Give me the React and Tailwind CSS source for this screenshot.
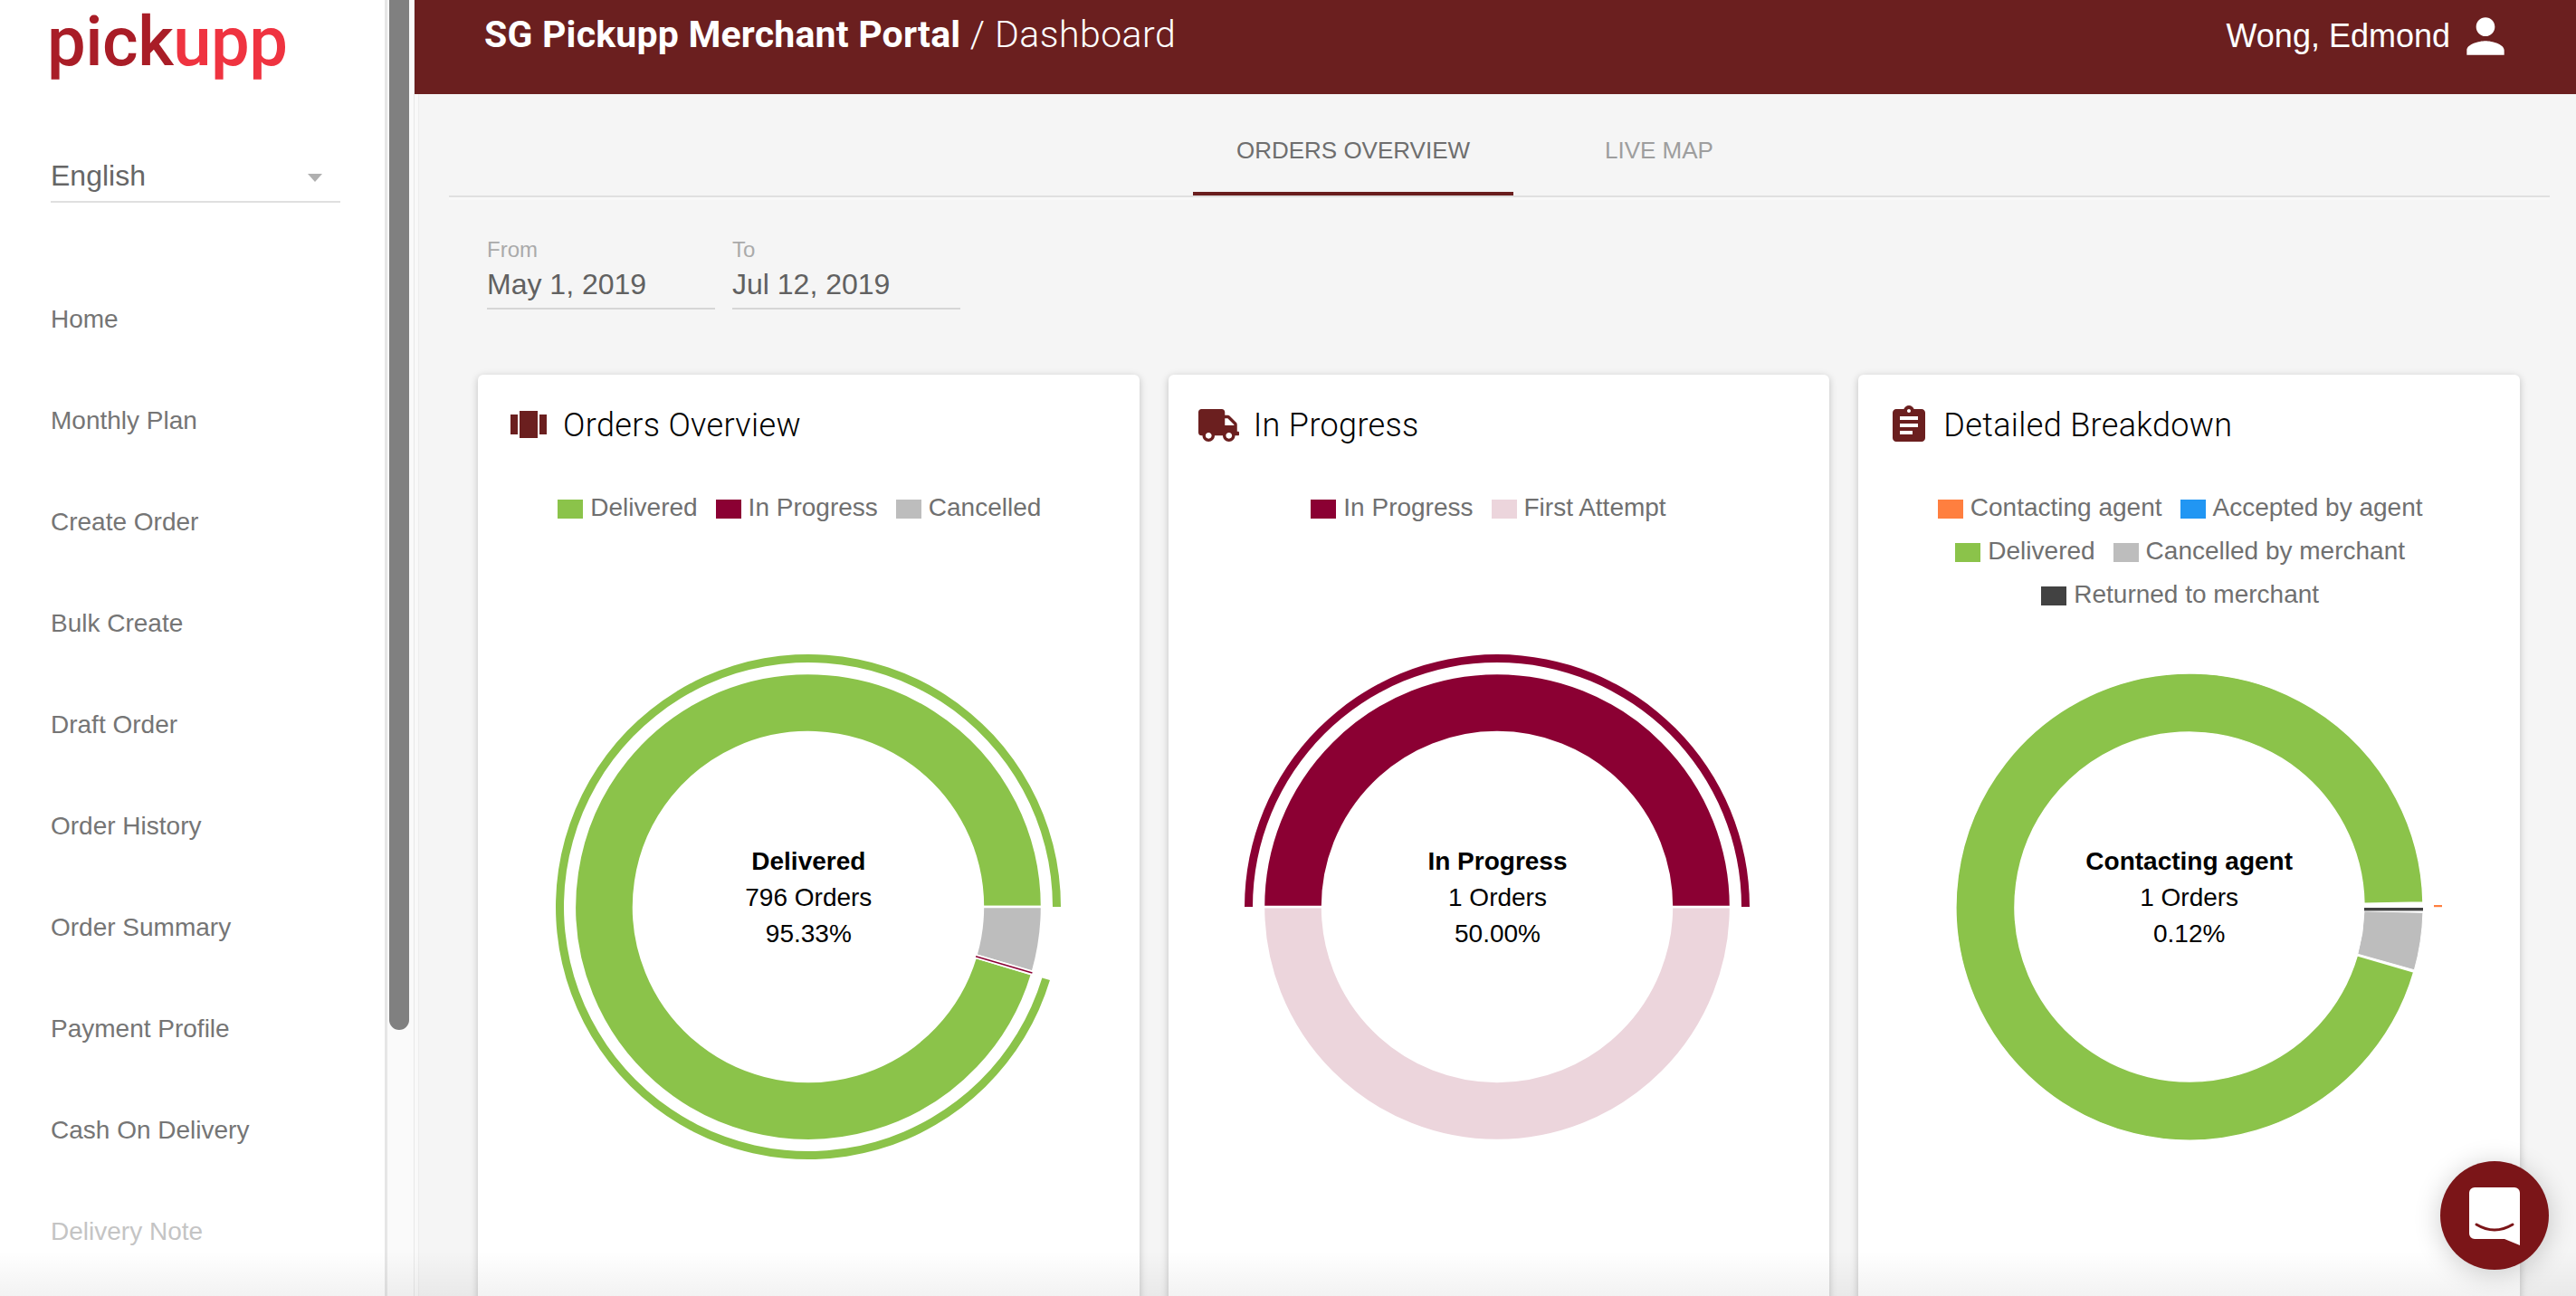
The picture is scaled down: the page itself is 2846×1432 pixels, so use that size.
import React from "react";
import { FaTruck } from "react-icons/fa";

const GREEN = "#8bc34a", CRIMSON = "#8b0033", PINK = "#ecd5dc", GREY = "#bdbdbd", ORANGE = "#ff7f3f", BLUE = "#2196f3", DARK = "#424242";
const C = 300;

function arc(r0, r1, a0, a1) {
  const p = (r, a) => {
    const t = (a * Math.PI) / 180;
    return `${(C + r * Math.cos(t)).toFixed(2)} ${(C + r * Math.sin(t)).toFixed(2)}`;
  };
  const large = a1 - a0 > 180 ? 1 : 0;
  return `M${p(r1, a0)}A${r1} ${r1} 0 ${large} 1 ${p(r1, a1)}L${p(r0, a1)}A${r0} ${r0} 0 ${large} 0 ${p(r0, a0)}Z`;
}
function radial(a, r0, r1) {
  const t = (a * Math.PI) / 180;
  return { x1: C + r0 * Math.cos(t), y1: C + r0 * Math.sin(t), x2: C + r1 * Math.cos(t), y2: C + r1 * Math.sin(t) };
}

const R0 = 193, R1 = 258, H0 = 270, H1 = 279;

function Chart1() {
  return (
    <svg width="600" height="600" viewBox="0 0 600 600" className="block mx-auto">
      <path d={arc(R0, R1, 16.8, 360)} fill={GREEN} stroke="#fff" strokeWidth="2.4" />
      <path d={arc(R0, R1, 0, 16.1)} fill={GREY} stroke="#fff" strokeWidth="2.4" />
      <line {...radial(16.45, R0, R1)} stroke="#fff" strokeWidth="5" />
      <line {...radial(16.45, R0, R1)} stroke={CRIMSON} strokeWidth="1.6" />
      <path d={arc(H0, H1, 16.9, 360)} fill={GREEN} />
    </svg>
  );
}
function Chart2() {
  return (
    <svg width="600" height="600" viewBox="0 0 600 600" className="block mx-auto">
      <path d={arc(R0, R1, 0, 180)} fill={PINK} stroke="#fff" strokeWidth="2.4" />
      <path d={arc(R0, R1, 180, 360)} fill={CRIMSON} stroke="#fff" strokeWidth="2.4" />
      <path d={arc(H0, H1, 180, 360)} fill={CRIMSON} />
    </svg>
  );
}
function Chart3() {
  return (
    <svg width="600" height="600" viewBox="0 0 600 600" className="block mx-auto">
      <path d={arc(R0, R1, 16.2, 358.9)} fill={GREEN} stroke="#fff" strokeWidth="1.4" />
      <path d={arc(R0, R1, 1.4, 15.7)} fill={GREY} stroke="#fff" strokeWidth="1" />
      <rect x={C + R0} y={C + 1} width={R1 - R0} height="3.4" fill={DARK} />
      <rect x={C + 270} y={C - 2} width="9" height="2.2" fill={ORANGE} />
    </svg>
  );
}

const ICON = "#6b1f1f";
const CarouselIcon = () => (
  <svg viewBox="0 0 48 48" className="w-12 h-12" fill={ICON}>
    <rect x="4" y="12" width="8" height="22" />
    <rect x="14" y="8" width="20" height="30" />
    <rect x="36" y="12" width="8" height="22" />
  </svg>
);
const TruckIcon = () => (
  <span className="w-12 h-12 flex items-center justify-center">
    <FaTruck className="w-[45px] h-[36px]" style={{ color: ICON }} />
  </span>
);
const ClipboardIcon = () => (
  <svg viewBox="0 0 24 24" className="w-12 h-12" fill={ICON}>
    <path d="M19 3h-4.18C14.4 1.84 13.3 1 12 1c-1.3 0-2.4.84-2.82 2H5c-1.1 0-2 .9-2 2v14c0 1.1.9 2 2 2h14c1.1 0 2-.9 2-2V5c0-1.1-.9-2-2-2zm-7 0c.55 0 1 .45 1 1s-.45 1-1 1-1-.45-1-1 .45-1 1-1zm2 14H7v-2h7v2zm3-4H7v-2h10v2zm0-4H7V7h10v2z" />
  </svg>
);

function Legend({ rows }) {
  return (
    <div className="h-[208px] pt-[43px] font-['Liberation_Sans',Arial,sans-serif] text-[28px] text-[#707070]">
      {rows.map((row, i) => (
        <div key={i} className="h-12 flex items-center justify-center">
          {row.map(([label, color]) => (
            <span key={label} className="flex items-center mr-[20px]">
              <span className="w-[28px] h-[21px] mr-[8px] mt-[2px]" style={{ background: color }} />
              <span>{label}</span>
            </span>
          ))}
        </div>
      ))}
    </div>
  );
}

function Card({ icon, title, rows, chart, center, shift }) {
  return (
    <div className={`bg-white rounded-[6px] shadow-[0_2px_8px_rgba(0,0,0,0.22)] h-[1100px] pt-8 ${shift ? "pr-[3px]" : ""}`}>
      <div className="flex items-center gap-[14px] pl-8 h-12">
        {icon}
        <span className="font-['Roboto',sans-serif] font-light text-[36px] text-black tracking-[0.35px]">{title}</span>
      </div>
      <Legend rows={rows} />
      <div className="relative">
        {chart}
        <div className="absolute inset-0 pb-[20px] flex flex-col items-center justify-center font-['Liberation_Sans',Arial,sans-serif] text-[28px] leading-[40px] text-black">
          <span className="font-bold">{center[0]}</span>
          <span>{center[1]}</span>
          <span>{center[2]}</span>
        </div>
      </div>
    </div>
  );
}

const NAV = ["Home", "Monthly Plan", "Create Order", "Bulk Create", "Draft Order", "Order History", "Order Summary", "Payment Profile", "Cash On Delivery"];

export default function App() {
  return (
    <div className="relative flex w-[2846px] h-[1432px] overflow-hidden bg-[#f5f5f5] font-['Liberation_Sans',Arial,sans-serif]">
      {/* Sidebar */}
      <aside className="w-[428px] shrink-0 bg-white border-r-[3px] border-[#e6e6e6]">
        <svg width="372" height="104" viewBox="0 0 372 104" className="block ml-[52px]">
          <text x="0" y="72" textLength="266" lengthAdjust="spacing" className="font-['Roboto',sans-serif] font-medium text-[76px]">
            <tspan fill="#a91d27">pick</tspan>
            <tspan fill="#ef3340">upp</tspan>
          </text>
        </svg>
        <div className="ml-[56px] w-[320px] h-[120px] pt-[68px] relative border-b-2 border-[#e0e0e0] text-[32px] leading-[44px] text-[#666666]">
          English
          <span className="absolute right-[20px] top-[88px] w-0 h-0 border-x-[8px] border-x-transparent border-t-[9px] border-t-[#b0b0b0]" />
        </div>
        <nav className="mt-[73px] pl-[56px] text-[28px] text-[#757575]">
          {NAV.map((n) => (
            <div key={n} className="h-[112px] flex items-center">{n}</div>
          ))}
          <div className="h-[112px] flex items-center text-[#c4c4c4]">Delivery Note</div>
        </nav>
      </aside>

      {/* Scrollbar */}
      <div className="w-[30px] shrink-0 bg-[#fafafa] border-r border-[#e8e8e8]">
        <div className="ml-[2px] w-[22px] h-[1138px] bg-[#808080] rounded-b-[11px]" />
      </div>

      {/* Main */}
      <main className="flex-1 min-w-0 shadow-[inset_4px_0_0_#f9f9f9,inset_5px_0_0_#eeeeee]">
        <header className="h-[104px] bg-[#6b1f1f] text-white flex items-start justify-between pl-[77px] pr-[69px]">
          <div className="mt-[14px] text-[41px] leading-[48px] font-['Roboto',sans-serif]">
            <span className="font-bold tracking-[0.2px]">SG Pickupp Merchant Portal</span>
            <span className="font-light tracking-[0.45px]"> / Dashboard</span>
          </div>
          <div className="flex items-center mt-[9px] h-[62px]">
            <span className="text-[36px] mr-[8px]">Wong, Edmond</span>
            <svg viewBox="0 0 24 24" className="w-[62px] h-[62px]" fill="#fff">
              <path d="M12 12c2.21 0 4-1.79 4-4s-1.79-4-4-4-4 1.79-4 4 1.79 4 4 4zm0 2c-2.67 0-8 1.34-8 4v2h16v-2c0-2.66-5.33-4-8-4z" />
            </svg>
          </div>
        </header>

        <div className="ml-[38px] mr-[29px] h-[114px] border-b-2 border-[#e0e0e0] shadow-[0_3px_0_#f8f8f8] flex pl-[822px] text-[26px]">
          <div className="w-[354px] h-[112px] pt-[16px] flex items-center justify-center border-b-4 border-[#6b1f1f] text-[#6e6e6e]">ORDERS OVERVIEW</div>
          <div className="w-[322px] h-[112px] pt-[12px] flex items-center justify-center text-[#9e9e9e]">LIVE MAP</div>
        </div>

        <div className="flex gap-[19px] ml-[80px] mt-[38px]">
          {[["From", "May 1, 2019"], ["To", "Jul 12, 2019"]].map(([l, v]) => (
            <div key={l} className="w-[252px] h-[86px] border-b-2 border-[#d6d6d6]">
              <div className="pt-[4px] text-[24px] leading-[32px] text-[#aaaaaa]">{l}</div>
              <div className="text-[32px] leading-[44px] text-[#616161]">{v}</div>
            </div>
          ))}
        </div>

        <div className="grid grid-cols-3 gap-8 ml-[70px] mr-[62px] mt-[72px]">
          <Card
            icon={<CarouselIcon />}
            title="Orders Overview"
            rows={[[["Delivered", GREEN], ["In Progress", CRIMSON], ["Cancelled", GREY]]]}
            chart={<Chart1 />}
            center={["Delivered", "796 Orders", "95.33%"]}
          />
          <Card
            shift
            icon={<TruckIcon />}
            title="In Progress"
            rows={[[["In Progress", CRIMSON], ["First Attempt", PINK]]]}
            chart={<Chart2 />}
            center={["In Progress", "1 Orders", "50.00%"]}
          />
          <Card
            icon={<ClipboardIcon />}
            title="Detailed Breakdown"
            rows={[
              [["Contacting agent", ORANGE], ["Accepted by agent", BLUE]],
              [["Delivered", GREEN], ["Cancelled by merchant", GREY]],
              [["Returned to merchant", DARK]],
            ]}
            chart={<Chart3 />}
            center={["Contacting agent", "1 Orders", "0.12%"]}
          />
        </div>
      </main>

      {/* Bottom fade */}
      <div className="absolute left-0 right-0 bottom-0 h-[50px] bg-gradient-to-b from-transparent to-black/5 pointer-events-none" />

      {/* Chat bubble */}
      <div className="absolute left-[2696px] top-[1283px] w-[120px] h-[120px] rounded-full bg-[#7b1518] shadow-[0_4px_30px_rgba(0,0,0,0.2)]">
        <svg viewBox="0 0 120 120" className="w-[120px] h-[120px]">
          <path d="M38 29h44a6 6 0 0 1 6 6v58l-17-7H38a6 6 0 0 1-6-6V35a6 6 0 0 1 6-6z" fill="#fff" />
          <path d="M40 70q20 12 40 0" fill="none" stroke="#7b1518" strokeWidth="3" strokeLinecap="round" />
        </svg>
      </div>
    </div>
  );
}
